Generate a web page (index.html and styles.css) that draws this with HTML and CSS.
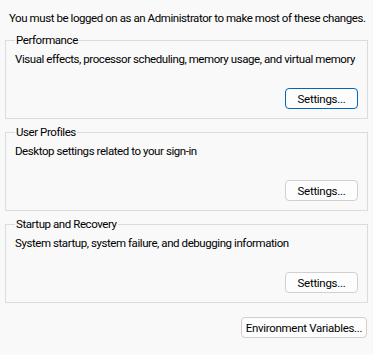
FILE: index.html
```html
<!DOCTYPE html>
<html lang="en">
<head>
    <meta charset="UTF-8">
    <title>System Properties - Advanced</title>
    <link rel="stylesheet" href="styles.css">
</head>
<body>
    <div class="panel">
        <p class="note">You must be logged on as an Administrator to make most of these changes.</p>

        <!-- Performance -->
        <fieldset class="group">
            <legend>Performance</legend>
            <p class="desc">Visual effects, processor scheduling, memory usage, and virtual memory</p>
            <div class="actions">
                <button class="btn btn-default">Settings...</button>
            </div>
        </fieldset>

        <!-- User Profiles -->
        <fieldset class="group">
            <legend>User Profiles</legend>
            <p class="desc">Desktop settings related to your sign-in</p>
            <div class="actions">
                <button class="btn">Settings...</button>
            </div>
        </fieldset>

        <!-- Startup and Recovery -->
        <fieldset class="group">
            <legend>Startup and Recovery</legend>
            <p class="desc">System startup, system failure, and debugging information</p>
            <div class="actions">
                <button class="btn">Settings...</button>
            </div>
        </fieldset>

        <div class="footer">
            <button class="btn btn-wide">Environment Variables...</button>
        </div>
    </div>
</body>
</html>
```

FILE: styles.css
```css
body {
    margin: 0;
    background: #f9f9f9;
    color: #000;
    font-family: Roboto, 'Liberation Sans', sans-serif;
    font-size: 11.5px;
    letter-spacing: -0.43px;
    line-height: 16px;
}
.panel {
    padding: 10px 5px 0 5px;
}
.note {
    margin: 0 0 6px 4px;
    white-space: nowrap;
}
.group {
    margin: 0 0 5px 0;
    padding: 0 9px 9px 9px;
    border: 1px solid #dcdcdc;
    min-width: 0;
}
.group legend {
    padding: 0 1px;
}
.desc {
    margin: 3px 0 0 0;
    white-space: nowrap;
}
.actions {
    display: flex;
    justify-content: flex-end;
    margin-top: 21px;
}
.btn {
    height: 21px;
    width: 73px;
    padding: 0;
    font-family: inherit;
    font-size: 11.5px;
    letter-spacing: -0.3px;
    color: #000;
    white-space: nowrap;
    background: #fdfdfd;
    border: 1px solid #d0d0d0;
    border-radius: 4px;
}
.btn-default {
    border-color: #0067c0;
}
.btn-wide {
    width: 126px;
}
.footer {
    display: flex;
    justify-content: flex-end;
    margin-top: 14px;
    padding-right: 1px;
}
```
